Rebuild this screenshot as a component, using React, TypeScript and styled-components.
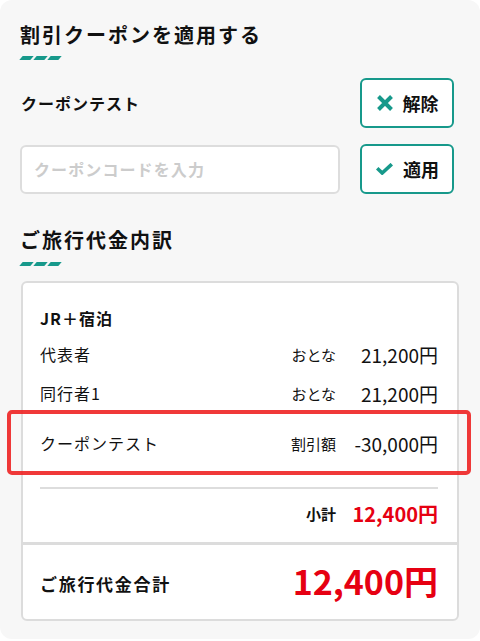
import React from "react";
import styled, { createGlobalStyle } from "styled-components";

const Global = createGlobalStyle`
  html, body { margin: 0; padding: 0; background: #ffffff; }
  body { font-family: "Noto Sans CJK JP", "Noto Sans", sans-serif; color: #1a1a1a; }
  * { box-sizing: border-box; }
`;

const TEAL = "#17998b";
const RED = "#e60012";

const Panel = styled.div`
  width: 480px;
  height: 639px;
  background: #f7f7f7;
  border-radius: 12px;
  padding: 20px 21px 0 20px;
  display: flex;
  flex-direction: column;
`;

const Heading = styled.h2<{ $mt?: number }>`
  margin: ${(p) => p.$mt ?? 0}px 0 0 0;
  font-size: 20px;
  line-height: 30px;
  font-weight: 700;
  letter-spacing: 2px;
  color: #111;
`;

const Stripes = styled.div<{ $mt: number }>`
  display: flex;
  gap: 3px;
  margin-top: ${(p) => p.$mt}px;
  padding-left: 1px;
  height: 4px;
`;

const Stripe = styled.span`
  width: 11px;
  height: 4px;
  background: ${TEAL};
  transform: skewX(-40deg);
`;

const CouponRow = styled.div<{ $mt: number }>`
  display: flex;
  align-items: center;
  justify-content: space-between;
  margin-top: ${(p) => p.$mt}px;
  padding-right: 5px;
`;

const AppliedName = styled.span`
  font-size: 16px;
  font-weight: 700;
  letter-spacing: 1px;
  margin-left: 1px;
  color: #111;
`;

const CodeInput = styled.input`
  width: 320px;
  height: 49px;
  border: 2px solid #dddddd;
  border-radius: 6px;
  background: #fff;
  padding: 0 12px;
  font-family: "Noto Sans CJK JP", "Noto Sans", sans-serif;
  font-size: 16px;
  font-weight: 700;
  letter-spacing: 1.1px;
  color: #222;
  outline: none;
  &::placeholder { color: #cccccc; }
`;

const ActionButton = styled.button`
  width: 94px;
  height: 50px;
  border: 2px solid ${TEAL};
  border-radius: 6px;
  background: #fff;
  display: flex;
  align-items: center;
  justify-content: center;
  gap: 10px;
  padding: 0 0 0 1px;
  font-family: "Noto Sans CJK JP", "Noto Sans", sans-serif;
  font-size: 18px;
  font-weight: 700;
  letter-spacing: 0;
  color: #111;
  cursor: pointer;
  svg { display: block; }
`;

const Card = styled.div`
  margin-top: 15px;
  margin-left: 1px;
  width: 438px;
  border: 2px solid #dcdcdc;
  border-radius: 6px;
  background: #fff;
`;

const Breakdown = styled.div`
  padding: 23px 19px 14px 17px;
  display: flex;
  flex-direction: column;
`;

const PlanTitle = styled.div`
  font-size: 16px;
  line-height: 24px;
  font-weight: 700;
  letter-spacing: 1px;
  color: #111;
`;

const Line = styled.div<{ $mt: number }>`
  position: relative;
  display: grid;
  grid-template-columns: 1fr auto 102px;
  align-items: center;
  height: 30px;
  margin-top: ${(p) => p.$mt}px;
`;

const LineName = styled.span`
  font-size: 16px;
  letter-spacing: 1px;
  color: #111;
`;

const LineType = styled.span<{ $bold?: boolean }>`
  font-size: 15px;
  letter-spacing: 0;
  font-weight: ${(p) => (p.$bold ? 700 : 400)};
  color: #111;
  text-align: right;
`;

const Price = styled.span<{ $red?: boolean; $bold?: boolean }>`
  font-size: ${(p) => (p.$bold ? 20 : 19)}px;
  font-weight: ${(p) => (p.$bold ? 700 : 400)};
  color: ${(p) => (p.$red ? RED : "#111")};
  text-align: right;
  letter-spacing: 0;
`;

const Highlight = styled.div`
  position: absolute;
  top: -18px;
  bottom: -17px;
  left: -33px;
  right: -33px;
  border: 4px solid rgba(238, 30, 30, 0.88);
  border-radius: 5px;
  pointer-events: none;
`;

const Divider = styled.hr<{ $mt: number }>`
  margin: ${(p) => p.$mt}px 0 0 0;
  border: none;
  height: 2px;
  background: #dddddd;
  width: 100%;
`;

const TotalSection = styled.div`
  border-top: 3px solid #dcdcdc;
  height: 77px;
  padding: 0 19px 0 17px;
  display: flex;
  align-items: center;
  justify-content: space-between;
`;

const TotalLabel = styled.span`
  font-size: 17px;
  font-weight: 700;
  letter-spacing: 1.7px;
  color: #111;
  margin-top: 3px;
`;

const TotalPrice = styled.span`
  font-size: 34px;
  font-weight: 700;
  color: ${RED};
  letter-spacing: 0;
  margin-top: -3px;
`;

const CrossIcon = () => (
  <svg width="16" height="16" viewBox="0 0 16 16">
    <path d="M1.5 1.5 L14.5 14.5 M14.5 1.5 L1.5 14.5" stroke={TEAL} strokeWidth="4" strokeLinecap="butt" />
  </svg>
);

const CheckIcon = () => (
  <svg width="17" height="12" viewBox="0 0 17 12">
    <path d="M1.2 5.2 L6.2 10 L15.8 1.2" stroke={TEAL} strokeWidth="3.6" fill="none" strokeLinejoin="miter" />
  </svg>
);

const HeadingStripes = ({ mt }: { mt: number }) => (
  <Stripes $mt={mt}>
    <Stripe />
    <Stripe />
    <Stripe />
  </Stripes>
);

export default function App() {
  return (
    <>
      <Global />
      <Panel>
        <Heading>割引クーポンを適用する</Heading>
        <HeadingStripes mt={6} />
        <CouponRow $mt={18}>
          <AppliedName>クーポンテスト</AppliedName>
          <ActionButton>
            <CrossIcon />
            解除
          </ActionButton>
        </CouponRow>
        <CouponRow $mt={16}>
          <CodeInput placeholder="クーポンコードを入力" />
          <ActionButton>
            <CheckIcon />
            適用
          </ActionButton>
        </CouponRow>
        <Heading $mt={31}>ご旅行代金内訳</Heading>
        <HeadingStripes mt={7} />
        <Card>
          <Breakdown>
            <PlanTitle>JR＋宿泊</PlanTitle>
            <Line $mt={9}>
              <LineName>代表者</LineName>
              <LineType>おとな</LineType>
              <Price>21,200円</Price>
            </Line>
            <Line $mt={9}>
              <LineName>同行者1</LineName>
              <LineType>おとな</LineType>
              <Price>21,200円</Price>
            </Line>
            <Line $mt={20}>
              <LineName>クーポンテスト</LineName>
              <LineType>割引額</LineType>
              <Price>-30,000円</Price>
              <Highlight />
            </Line>
            <Divider $mt={29} />
            <Line $mt={9}>
              <span />
              <LineType $bold>小計</LineType>
              <Price $red $bold>12,400円</Price>
            </Line>
          </Breakdown>
          <TotalSection>
            <TotalLabel>ご旅行代金合計</TotalLabel>
            <TotalPrice>12,400円</TotalPrice>
          </TotalSection>
        </Card>
      </Panel>
    </>
  );
}
